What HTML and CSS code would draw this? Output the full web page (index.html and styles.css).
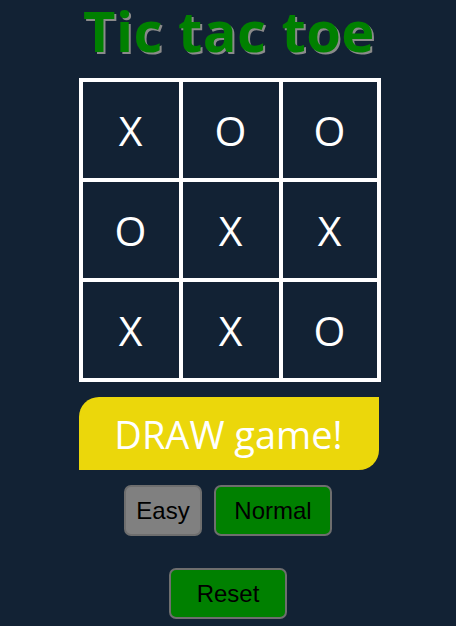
FILE: index.html
```html
<!DOCTYPE html>
<html>
<head>
<meta charset="utf-8">
<title>Tic tac toe</title>
<link rel="stylesheet" href="styles.css">
</head>
<body>
<div class="app">
  <h1 class="title">Tic tac toe</h1>
  <div class="board">
    <div class="cell">X</div>
    <div class="cell">O</div>
    <div class="cell">O</div>
    <div class="cell">O</div>
    <div class="cell">X</div>
    <div class="cell">X</div>
    <div class="cell">X</div>
    <div class="cell">X</div>
    <div class="cell">O</div>
  </div>
  <div class="status">DRAW game!</div>
  <div class="levels">
    <button class="btn btn-easy">Easy</button>
    <button class="btn btn-normal">Normal</button>
  </div>
  <button class="btn btn-reset">Reset</button>
</div>
</body>
</html>
```
FILE: styles.css
```css
html, body {
  margin: 0;
  padding: 0;
  background: #122234;
}
.app {
  width: 456px;
  display: flex;
  flex-direction: column;
  align-items: center;
  font-family: "Open Sans", "Noto Sans", sans-serif;
}
.title {
  margin: 0;
  padding-top: 2px;
  font-size: 56px;
  line-height: 56px;
  height: 58px;
  font-weight: 700;
  color: #008000;
  text-shadow: 2px 2px 0 #8a8a8a;
  letter-spacing: 0.5px;
  margin-left: 2px;
  box-sizing: border-box;
}
.board {
  margin-top: 20px;
  margin-left: 3px;
  display: grid;
  grid-template-columns: 100px 100px 98px;
  grid-template-rows: 100px 100px 100px;
  border: 2px solid #fff;
}
.cell {
  box-sizing: border-box;
  border: 2px solid #fff;
  display: flex;
  align-items: center;
  justify-content: center;
  color: #fff;
  font-size: 41px;
  line-height: 1;
}
.status {
  margin-top: 15px;
  width: 300px;
  height: 73px;
  margin-left: 1px;
  background: #ebd70b;
  border-radius: 20px 0 20px 0;
  color: #fff;
  font-size: 38px;
  display: flex;
  align-items: center;
  justify-content: center;
}
.levels {
  margin-top: 15px;
  display: flex;
  gap: 12px;
}
.btn {
  box-sizing: border-box;
  height: 51px;
  border: 2px solid #6e6e6e;
  border-radius: 7px;
  font-family: "Liberation Sans", Arial, sans-serif;
  font-size: 24px;
  color: #000;
  padding: 0;
}
.btn-easy {
  width: 78px;
  background: #808080;
}
.btn-normal {
  width: 118px;
  background: #008000;
}
.btn-reset {
  margin-top: 32px;
  width: 118px;
  background: #008000;
}
```
